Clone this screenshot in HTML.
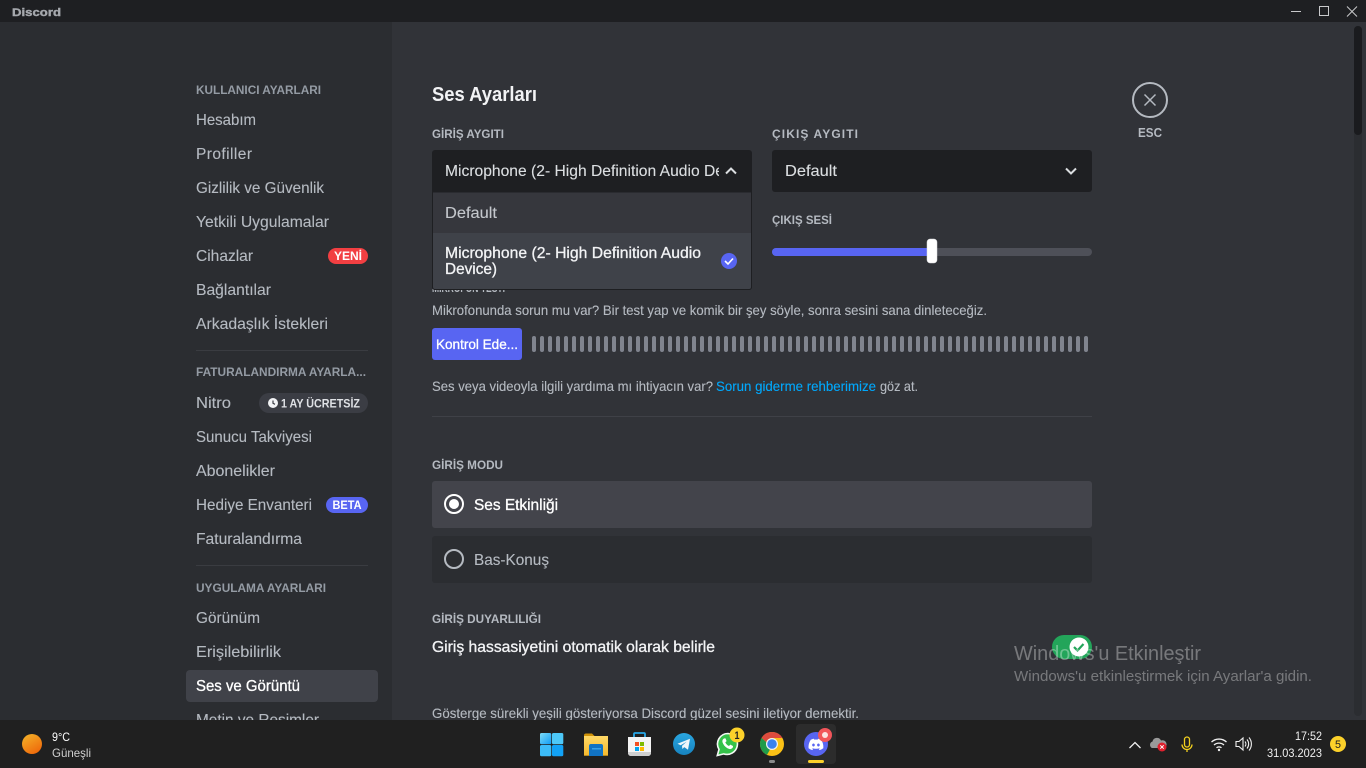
<!DOCTYPE html>
<html lang="tr">
<head>
<meta charset="utf-8">
<title>Discord</title>
<style>
html,body{margin:0;padding:0;width:1366px;height:768px;overflow:hidden;background:#313338}
svg{display:block;position:absolute;left:0;top:0}
text{font-family:"Liberation Sans","DejaVu Sans",sans-serif;font-size:16px;color:#b5bac1;fill:currentColor;stroke:currentColor;stroke-width:.12px}
.h{font-size:12px;font-weight:bold;color:#b5bac1;stroke-width:0}
.sh{font-size:12px;font-weight:bold;color:#949ba4;stroke-width:0}
.s{font-size:14px}
.m{stroke-width:.32px}
.b{font-size:12px;font-weight:bold;color:#fff;stroke-width:0}
.n{stroke-width:0}
</style>
</head>
<body>
<svg width="1366" height="768" viewBox="0 0 1366 768" xmlns="http://www.w3.org/2000/svg">
<defs>
<linearGradient id="sun" x1="0" y1="0" x2="0.6" y2="1"><stop offset="0" stop-color="#f4b62a"/><stop offset="1" stop-color="#ef6c0c"/></linearGradient>
<linearGradient id="win" x1="0" y1="0" x2="1" y2="1"><stop offset="0" stop-color="#7ddcf8"/><stop offset="1" stop-color="#0f9cf5"/></linearGradient>
<linearGradient id="fold" x1="0" y1="0" x2="0" y2="1"><stop offset="0" stop-color="#ffd966"/><stop offset="1" stop-color="#f5b92f"/></linearGradient>
<linearGradient id="tg" x1="0" y1="0" x2="0" y2="1"><stop offset="0" stop-color="#2aa6e0"/><stop offset="1" stop-color="#1783bf"/></linearGradient>
<clipPath id="c1"><rect x="445" y="155" width="274" height="32"/></clipPath>
<clipPath id="c2"><rect x="0" y="0" width="1366" height="720"/></clipPath>
</defs>

<!-- backgrounds -->
<rect width="1366" height="768" fill="#313338"/>
<rect y="22" width="392" height="698" fill="#2b2d31"/>
<rect width="1366" height="22" fill="#1e1f22"/>

<!-- title bar -->
<text x="12" y="16" textLength="49" lengthAdjust="spacingAndGlyphs" style="font-size:11px;font-weight:bold;color:#a5a8ad;stroke-width:.4px">Discord</text>
<path d="M1291 11.500h10" stroke="#c8c9cb" fill="none"/>
<rect x="1319.500" y="6.500" width="9" height="9" stroke="#c8c9cb" fill="none"/>
<path d="M1347 6.500l10 10M1357 6.500l-10 10" stroke="#c8c9cb" fill="none"/>

<!-- sidebar -->
<text class="sh" x="196" y="94" textLength="125" lengthAdjust="spacingAndGlyphs">KULLANICI AYARLARI</text>
<text x="196" y="125" textLength="60" lengthAdjust="spacingAndGlyphs">Hesabım</text>
<text x="196" y="159" textLength="56" lengthAdjust="spacing" style="font-size:15.500px">Profiller</text>
<text x="196" y="193" textLength="128" lengthAdjust="spacingAndGlyphs">Gizlilik ve Güvenlik</text>
<text x="196" y="227" textLength="133" lengthAdjust="spacingAndGlyphs">Yetkili Uygulamalar</text>
<text x="196" y="261" textLength="57" lengthAdjust="spacingAndGlyphs">Cihazlar</text>
<rect x="328" y="248" width="40" height="16" rx="8" fill="#f23f42"/>
<text class="b" x="334" y="260" textLength="28" lengthAdjust="spacingAndGlyphs">YENİ</text>
<text x="196" y="295" textLength="75" lengthAdjust="spacingAndGlyphs">Bağlantılar</text>
<text x="196" y="329" textLength="132" lengthAdjust="spacingAndGlyphs">Arkadaşlık İstekleri</text>
<rect x="196" y="350" width="172" height="1" fill="#3a3c41"/>
<text class="sh" x="196" y="376" textLength="170" lengthAdjust="spacingAndGlyphs">FATURALANDIRMA AYARLA...</text>
<text x="196" y="408" textLength="35" lengthAdjust="spacingAndGlyphs">Nitro</text>
<rect x="259" y="393" width="109" height="20" rx="10" fill="#3b3d44"/>
<circle cx="273" cy="403" r="5" fill="#f2f3f5"/>
<path d="M273 400.500v2.800l2 1" stroke="#3b3d44" stroke-width="1.200" fill="none"/>
<text class="b" x="281" y="407.500" textLength="79" lengthAdjust="spacingAndGlyphs" style="color:#dfe1e5">1 AY ÜCRETSİZ</text>
<text x="196" y="442" textLength="116" lengthAdjust="spacingAndGlyphs">Sunucu Takviyesi</text>
<text x="196" y="476" textLength="79" lengthAdjust="spacingAndGlyphs">Abonelikler</text>
<text x="196" y="510" textLength="116" lengthAdjust="spacingAndGlyphs">Hediye Envanteri</text>
<rect x="326" y="497" width="42" height="16" rx="8" fill="#5865f2"/>
<text class="b" x="332.500" y="509" textLength="29" lengthAdjust="spacingAndGlyphs">BETA</text>
<text x="196" y="544" textLength="106" lengthAdjust="spacingAndGlyphs">Faturalandırma</text>
<rect x="196" y="565" width="172" height="1" fill="#3a3c41"/>
<text class="sh" x="196" y="592" textLength="130" lengthAdjust="spacingAndGlyphs">UYGULAMA AYARLARI</text>
<text x="196" y="623" textLength="64" lengthAdjust="spacingAndGlyphs">Görünüm</text>
<text x="196" y="657" textLength="85" lengthAdjust="spacingAndGlyphs">Erişilebilirlik</text>
<rect x="186" y="670" width="192" height="32" rx="4" fill="#404249"/>
<text class="m" x="196" y="691" textLength="104" lengthAdjust="spacingAndGlyphs" style="color:#fff">Ses ve Görüntü</text>
<text x="196" y="725" textLength="123" lengthAdjust="spacingAndGlyphs" clip-path="url(#c2)">Metin ve Resimler</text>

<!-- scrollbar -->
<rect x="1354" y="26" width="8" height="690" rx="4" fill="#2b2d31"/>
<rect x="1354" y="26" width="8" height="109" rx="4" fill="#1a1b1e"/>

<!-- close -->
<circle cx="1150" cy="100" r="17" fill="none" stroke="#b5bac1" stroke-width="2"/>
<path d="M1144.500 94.500l11 11M1155.500 94.500l-11 11" stroke="#b5bac1" stroke-width="1.500" fill="none"/>
<text class="n" x="1138" y="137" textLength="24" lengthAdjust="spacingAndGlyphs" style="font-size:13px;font-weight:bold">ESC</text>

<!-- main heading -->
<text class="n" x="432" y="101" textLength="105" lengthAdjust="spacingAndGlyphs" style="font-size:20px;font-weight:bold;color:#f2f3f5">Ses Ayarları</text>
<text class="h" x="432" y="138" textLength="72" lengthAdjust="spacingAndGlyphs">GİRİŞ AYGITI</text>
<text class="h" x="772" y="138" textLength="86" lengthAdjust="spacing">ÇIKIŞ AYGITI</text>

<!-- microphone test (behind dropdown) -->
<text class="h" x="432" y="292" textLength="73" lengthAdjust="spacingAndGlyphs">MİKROFON TESTİ</text>

<!-- output select -->
<rect x="772" y="150" width="320" height="42" rx="3" fill="#1e1f22"/>
<text x="785" y="176" textLength="52" lengthAdjust="spacingAndGlyphs" style="color:#dbdee1">Default</text>
<path d="M1066 168.500l5 5 5-5" stroke="#dbdee1" stroke-width="2" fill="none"/>

<!-- input select -->
<path d="M435 150h314a3 3 0 0 1 3 3v39h-320v-39a3 3 0 0 1 3-3z" fill="#1e1f22"/>
<path d="M432.500 192h319v95a2.500 2.500 0 0 1-2.500 2.500h-314a2.500 2.500 0 0 1-2.500-2.500z" fill="#36373d" stroke="#1e1f22"/>
<rect x="433" y="233" width="318" height="56" fill="#3f4249"/>
<path d="M432.500 192v95a2.500 2.500 0 0 0 2.500 2.500h314a2.500 2.500 0 0 0 2.500-2.500v-95" fill="none" stroke="#1e1f22"/>
<text clip-path="url(#c1)" x="445" y="176" textLength="312" lengthAdjust="spacingAndGlyphs" style="color:#dbdee1">Microphone (2- High Definition Audio Device)</text>
<path d="M726 173.500l5-5 5 5" stroke="#dbdee1" stroke-width="2" fill="none"/>
<text x="445" y="218" textLength="52" lengthAdjust="spacingAndGlyphs" style="color:#c4c7cc">Default</text>
<text class="m" x="445" y="258" textLength="256" lengthAdjust="spacingAndGlyphs" style="color:#f2f3f5">Microphone (2- High Definition Audio</text>
<text class="m" x="445" y="274" textLength="52" lengthAdjust="spacingAndGlyphs" style="color:#f2f3f5">Device)</text>
<circle cx="729" cy="261" r="8" fill="#5865f2"/>
<path d="M725 261l3 3 5-5.500" stroke="#fff" stroke-width="1.600" fill="none"/>

<!-- output volume -->
<text class="h" x="772" y="224" textLength="60" lengthAdjust="spacingAndGlyphs">ÇIKIŞ SESİ</text>
<rect x="772" y="248" width="320" height="8" rx="4" fill="#4e5058"/>
<path d="M776 248h156v8h-156a4 4 0 0 1 0-8z" fill="#5865f2"/>
<rect x="927" y="239" width="10" height="24" rx="3" fill="#fff" stroke="#d8d9dc" stroke-width=".5"/>

<!-- mic test -->
<text class="s" x="432" y="315" textLength="555" lengthAdjust="spacingAndGlyphs">Mikrofonunda sorun mu var? Bir test yap ve komik bir şey söyle, sonra sesini sana dinleteceğiz.</text>
<rect x="432" y="328" width="90" height="32" rx="3" fill="#5865f2"/>
<text class="s m" x="436" y="349" textLength="82" lengthAdjust="spacingAndGlyphs" style="color:#fff">Kontrol Ede...</text>
<path fill="none" stroke="#80848e" stroke-width="4" stroke-linecap="round" d="M534 338v12m8-12v12m8-12v12m8-12v12m8-12v12m8-12v12m8-12v12m8-12v12m8-12v12m8-12v12m8-12v12m8-12v12m8-12v12m8-12v12m8-12v12m8-12v12m8-12v12m8-12v12m8-12v12m8-12v12m8-12v12m8-12v12m8-12v12m8-12v12m8-12v12m8-12v12m8-12v12m8-12v12m8-12v12m8-12v12m8-12v12m8-12v12m8-12v12m8-12v12m8-12v12m8-12v12m8-12v12m8-12v12m8-12v12m8-12v12m8-12v12m8-12v12m8-12v12m8-12v12m8-12v12m8-12v12m8-12v12m8-12v12m8-12v12m8-12v12m8-12v12m8-12v12m8-12v12m8-12v12m8-12v12m8-12v12m8-12v12m8-12v12m8-12v12m8-12v12m8-12v12m8-12v12m8-12v12m8-12v12m8-12v12m8-12v12m8-12v12m8-12v12m8-12v12m8-12v12"/>
<text class="s" x="432" y="391" textLength="281" lengthAdjust="spacingAndGlyphs">Ses veya videoyla ilgili yardıma mı ihtiyacın var?</text>
<text class="s" x="716" y="391" textLength="160" lengthAdjust="spacingAndGlyphs" style="color:#00a8fc">Sorun giderme rehberimize</text>
<text class="s" x="880" y="391" textLength="38" lengthAdjust="spacingAndGlyphs">göz at.</text>
<rect x="432" y="416" width="660" height="1" fill="#3f4147"/>

<!-- input mode -->
<text class="h" x="432" y="469" textLength="71" lengthAdjust="spacingAndGlyphs">GİRİŞ MODU</text>
<rect x="432" y="481" width="660" height="47" rx="3" fill="#43444b"/>
<rect x="432" y="536" width="660" height="47" rx="3" fill="#2b2d31"/>
<circle cx="454" cy="504" r="9" fill="none" stroke="#fff" stroke-width="2"/>
<circle cx="454" cy="504" r="5" fill="#fff"/>
<text class="m" x="474" y="510" textLength="84" lengthAdjust="spacingAndGlyphs" style="color:#fff">Ses Etkinliği</text>
<circle cx="454" cy="559" r="9" fill="none" stroke="#b5bac1" stroke-width="2"/>
<text x="474" y="565" textLength="75" lengthAdjust="spacingAndGlyphs">Bas-Konuş</text>

<!-- sensitivity -->
<text class="h" x="432" y="623" textLength="109" lengthAdjust="spacingAndGlyphs">GİRİŞ DUYARLILIĞI</text>
<text class="m" x="432" y="652" textLength="283" lengthAdjust="spacingAndGlyphs" style="color:#f2f3f5">Giriş hassasiyetini otomatik olarak belirle</text>
<rect x="1052" y="635" width="40" height="24" rx="12" fill="#23a55a"/>
<circle cx="1079" cy="647" r="9.500" fill="#fff"/>
<path d="M1074 647l3.500 3.500 6-6.500" stroke="#23a55a" stroke-width="2.200" fill="none"/>
<text class="s" x="432" y="718" textLength="427" lengthAdjust="spacingAndGlyphs">Gösterge sürekli yeşili gösteriyorsa Discord güzel sesini iletiyor demektir.</text>

<!-- windows watermark -->
<text class="n" x="1014" y="660" textLength="187" lengthAdjust="spacingAndGlyphs" style="font-size:20px;color:rgba(255,255,255,.34)">Windows'u Etkinleştir</text>
<text class="n" x="1014" y="681" textLength="298" lengthAdjust="spacingAndGlyphs" style="font-size:14.500px;color:rgba(255,255,255,.34)">Windows'u etkinleştirmek için Ayarlar'a gidin.</text>

<!-- taskbar -->
<rect y="720" width="1366" height="48" fill="#202020"/>
<circle cx="32" cy="744" r="10" fill="url(#sun)"/>
<text class="n" x="52" y="741" textLength="18" lengthAdjust="spacingAndGlyphs" style="font-size:12px;color:#fff">9°C</text>
<text class="n" x="52" y="757" textLength="39" lengthAdjust="spacingAndGlyphs" style="font-size:12px;color:#cfcfcf">Güneşli</text>

<!-- start -->
<rect x="540" y="733" width="11.300" height="11.300" rx="1.500" fill="url(#win)"/>
<rect x="552" y="733" width="11.300" height="11.300" rx="1.500" fill="#4dc8f8"/>
<rect x="540" y="745" width="11.300" height="11.300" rx="1.500" fill="#3cbcf8"/>
<rect x="552" y="745" width="11.300" height="11.300" rx="1.500" fill="#12a2f6"/>

<!-- explorer -->
<path d="M584 735.500a2 2 0 0 1 2-2h6l3 3h-11z" fill="#cf9208"/>
<path d="M584 736h24v19h-24z" fill="url(#fold)"/>
<path d="M584 755h24v1h-24z" fill="#b98a1c"/>
<path d="M589 746a2 2 0 0 1 2-2h10a2 2 0 0 1 2 2v10h-14z" fill="#1173c4"/>
<path d="M592 748h9v1.500h-9z" fill="#37a0e8"/>

<!-- store -->
<path d="M634 737v-3a1 1 0 0 1 1-1h9a1 1 0 0 1 1 1v3" stroke="#28a8e8" stroke-width="1.800" fill="none"/>
<path d="M628 737h23v16a3 3 0 0 1-3 3h-17a3 3 0 0 1-3-3z" fill="#f4f4f4"/>
<path d="M628 752h23v1a3 3 0 0 1-3 3h-17a3 3 0 0 1-3-3z" fill="#cfcfcf"/>
<rect x="635" y="742" width="4" height="4" fill="#f25022"/><rect x="640" y="742" width="4" height="4" fill="#7fba00"/>
<rect x="635" y="747" width="4" height="4" fill="#00a4ef"/><rect x="640" y="747" width="4" height="4" fill="#ffb900"/>

<!-- telegram -->
<circle cx="684" cy="744" r="11" fill="url(#tg)"/>
<path d="M677.500 743.800l12.500-5-2 11-3.700-2.700-1.900 1.900-.4-3.100 4.700-4.300-6 3.700z" fill="#f0f6fa"/>

<!-- whatsapp -->
<path d="M728 733.500a10.500 10.500 0 0 0-9 15.900l-1.700 6.100 6.300-1.600a10.500 10.500 0 1 0 4.400-20.400z" fill="#35c24a" stroke="#f4f8f4" stroke-width="1.600"/>
<path d="M724 738.500c-1.500.8-2 2.400-1.300 4.300 1 2.700 3.300 5 6 6 1.900.7 3.500 0 4.200-1.500l.1-1.300-2.700-1.400-1.300 1.400c-1.700-.7-3-2-3.700-3.700l1.300-1.200-1.200-2.800z" fill="#fff"/>
<circle cx="737" cy="735" r="7.500" fill="#fcd12a"/>
<text class="n" x="734.500" y="739" textLength="5" lengthAdjust="spacingAndGlyphs" style="font-size:11px;font-weight:bold;color:#222">1</text>

<!-- chrome -->
<circle cx="772" cy="744" r="12" fill="#fbc116"/>
<path d="M772 732a12 12 0 0 1 10.400 6h-10.400a6 6 0 0 0-5.700 4.100l-4.700-4.100a12 12 0 0 1 10.400-6z" fill="#dd4b3e"/>
<path d="M761.600 738a12 12 0 0 0 5.400 16.900l5-8.900a6 6 0 0 1-5.700-3.900z" fill="#1f9b4b"/>
<circle cx="772" cy="744" r="6" fill="#f1f3f4"/>
<circle cx="772" cy="744" r="4.800" fill="#3b82f0"/>
<rect x="769" y="760" width="6" height="3" rx="1.500" fill="#8b8b8b"/>

<!-- discord -->
<rect x="796" y="724" width="40" height="40" rx="4" fill="#2c2c2c"/>
<circle cx="816" cy="744" r="12" fill="#5865f2"/>
<g transform="translate(808.500 737) scale(.62)">
<path fill="#fff" d="M20.317 4.370a19.791 19.791 0 0 0-4.885-1.515.074.074 0 0 0-.079.037c-.21.375-.444.864-.608 1.250a18.270 18.270 0 0 0-5.487 0 12.640 12.640 0 0 0-.617-1.250.077.077 0 0 0-.079-.037A19.736 19.736 0 0 0 3.677 4.370a.070.070 0 0 0-.032.027C.533 9.046-.32 13.580.099 18.057a.082.082 0 0 0 .031.057 19.900 19.900 0 0 0 5.993 3.030.078.078 0 0 0 .084-.028 14.090 14.090 0 0 0 1.226-1.994.076.076 0 0 0-.041-.106 13.107 13.107 0 0 1-1.872-.892.077.077 0 0 1-.008-.128 10.200 10.200 0 0 0 .372-.292.074.074 0 0 1 .077-.010c3.928 1.793 8.180 1.793 12.062 0a.074.074 0 0 1 .078.010c.12.098.246.198.373.292a.077.077 0 0 1-.006.127 12.299 12.299 0 0 1-1.873.892.077.077 0 0 0-.041.107c.36.698.772 1.362 1.225 1.993a.076.076 0 0 0 .084.028 19.839 19.839 0 0 0 6.002-3.030.077.077 0 0 0 .032-.054c.5-5.177-.838-9.674-3.549-13.660a.061.061 0 0 0-.031-.030z"/>
<path fill="#5865f2" d="M8.020 15.330c-1.183 0-2.157-1.085-2.157-2.419 0-1.333.956-2.419 2.157-2.419 1.210 0 2.176 1.096 2.157 2.420 0 1.333-.956 2.418-2.157 2.418zm7.975 0c-1.183 0-2.157-1.085-2.157-2.419 0-1.333.955-2.419 2.157-2.419 1.210 0 2.176 1.096 2.157 2.420 0 1.333-.946 2.418-2.157 2.418z"/>
</g>
<circle cx="825" cy="735" r="7" fill="#f2555a"/>
<circle cx="825" cy="735" r="3" fill="#fbe3e3"/>
<rect x="808" y="760" width="16" height="3" rx="1.500" fill="#fcd12a"/>

<!-- tray -->
<path d="M1129.500 748l5.500-5.500 5.500 5.500" stroke="#f0f0f0" stroke-width="1.300" fill="none"/>
<path d="M1152 748a3.500 3.500 0 0 1 .5-6.500 4.500 4.500 0 0 1 8.500-1 3.500 3.500 0 0 1 3 7.500z" fill="#9a9a9a"/>
<circle cx="1162" cy="747" r="4.500" fill="#e0202e"/>
<path d="M1160.300 745.300l3.400 3.400M1163.700 745.300l-3.400 3.400" stroke="#fff" stroke-width="1" fill="none"/>
<rect x="1184.500" y="737" width="5" height="10" rx="2.500" fill="none" stroke="#f2d01e" stroke-width="1.300"/>
<path d="M1182 744.500a5 5 0 0 0 10 0M1187 750v2" stroke="#f2d01e" stroke-width="1.300" fill="none"/>
<path d="M1211.500 742a11 11 0 0 1 15 0M1214 745a7.500 7.500 0 0 1 10 0M1216.500 747.800a3.800 3.800 0 0 1 5 0" stroke="#f0f0f0" stroke-width="1.300" fill="none"/>
<circle cx="1219" cy="750" r="1.200" fill="#f0f0f0"/>
<path d="M1236 741.500h3l4-3.500v12l-4-3.500h-3z" stroke="#f0f0f0" stroke-width="1.100" fill="none"/>
<path d="M1245 741.500a4 4 0 0 1 0 5M1247 739.500a7 7 0 0 1 0 9M1249 737.500a10 10 0 0 1 0 13" stroke="#f0f0f0" stroke-width="1.100" fill="none"/>
<text class="n" x="1295" y="740" textLength="27" lengthAdjust="spacingAndGlyphs" style="font-size:12px;color:#f0f0f0">17:52</text>
<text class="n" x="1267" y="757" textLength="55" lengthAdjust="spacingAndGlyphs" style="font-size:12px;color:#f0f0f0">31.03.2023</text>
<circle cx="1338" cy="744" r="8" fill="#fcd12a"/>
<text class="n" x="1335" y="748" textLength="6" lengthAdjust="spacingAndGlyphs" style="font-size:11px;color:#222">5</text>
</svg>
</body>
</html>
